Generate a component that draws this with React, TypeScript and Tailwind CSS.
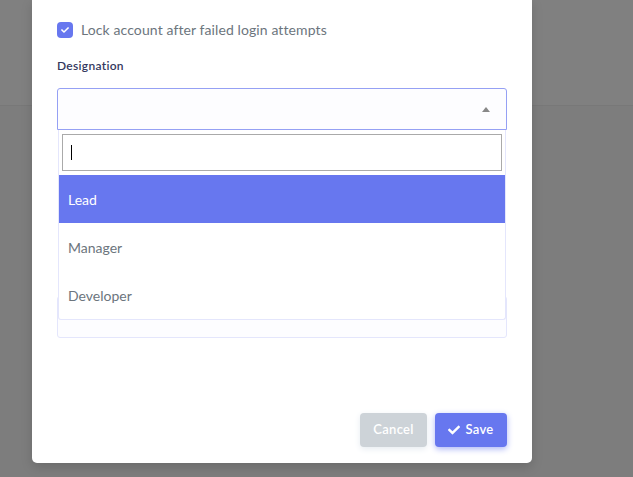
const options = ['Lead', 'Manager', 'Developer']

function CheckIcon({ className }: { className?: string }) {
  return (
    <svg viewBox="0 0 512 512" className={className} fill="currentColor">
      <path d="M173.9 439.4L7.5 273c-10-10-10-26.2 0-36.2l36.2-36.2c10-10 26.2-10 36.2 0L192 312.7 432.1 72.6c10-10 26.2-10 36.2 0l36.2 36.2c10 10 10 26.2 0 36.2L210.1 439.4c-10 10-26.2 10-36.2 0z" />
    </svg>
  )
}

export default function App() {
  return (
    <div className="relative w-[633px] h-[477px] overflow-hidden bg-[#7d7d7d] font-['Lato',sans-serif]">
      <div className="h-[106px] bg-[#808080] border-b border-[#787878]" />

      <div className="absolute left-[32px] top-0 w-[500px] h-[463px] bg-white rounded-b-[5px] shadow-[0_4px_12px_rgba(0,0,0,0.15)] flex flex-col px-[25px]">
        <div className="flex items-center gap-[8px] mt-[22px] h-[16px]">
          <span className="w-[16px] h-[16px] rounded-[4px] bg-[#6777ef] flex items-center justify-center text-white">
            <CheckIcon className="w-[8px] h-[8px]" />
          </span>
          <span className="text-[14px] tracking-[0.1px] text-[#6c757d] leading-none">Lock account after failed login attempts</span>
        </div>

        <label className="mt-[22px] text-[12px] font-semibold tracking-[0.3px] text-[#34395e] leading-none">Designation</label>

        <div className="relative mt-[16px]">
          <div className="h-[42px] border border-[#95a0f4] rounded-t-[3px] bg-[#fdfdff] flex items-center justify-end pr-[16px]">
            <span className="w-0 h-0 border-l-[4px] border-r-[4px] border-b-[5px] border-l-transparent border-r-transparent border-b-[#888]" />
          </div>

          <div className="mt-[166px] h-[42px] border border-[#e4e6fc] rounded-[3px] bg-[#fdfdff]" />

          <div className="absolute left-[1px] right-[1px] top-[42px] h-[190px] bg-white border border-t-0 border-[#e4e6fc] rounded-b-[3px] flex flex-col">
            <div className="px-[3px] py-[4px]">
              <div className="h-[37px] border border-[#aaa] flex items-center pl-[8px]">
                <span className="w-px h-[15px] bg-black" />
              </div>
            </div>
            {options.map((o, i) => (
              <div
                key={o}
                className={
                  i === 0
                    ? 'h-[48px] flex items-center px-[9px] bg-[#6777ef] text-white text-[14px]'
                    : 'h-[48px] flex items-center px-[9px] text-[#6c757d] text-[14px]'
                }
              >
                {o}
              </div>
            ))}
          </div>
        </div>

        <div className="mt-auto mb-[16px] flex justify-end gap-[8px]">
          <button className="w-[67px] h-[34px] rounded-[4px] bg-[#cdd3d8] text-white text-[13px] font-semibold tracking-[0.3px] shadow-[0_2px_6px_#e6ecf1]">
            Cancel
          </button>
          <button className="w-[72px] h-[34px] rounded-[4px] bg-[#6777ef] text-white text-[13px] font-semibold tracking-[0.3px] flex items-center justify-center gap-[5px] shadow-[0_2px_6px_#acb5f6]">
            <CheckIcon className="w-[12px] h-[12px]" />
            Save
          </button>
        </div>
      </div>
    </div>
  )
}
